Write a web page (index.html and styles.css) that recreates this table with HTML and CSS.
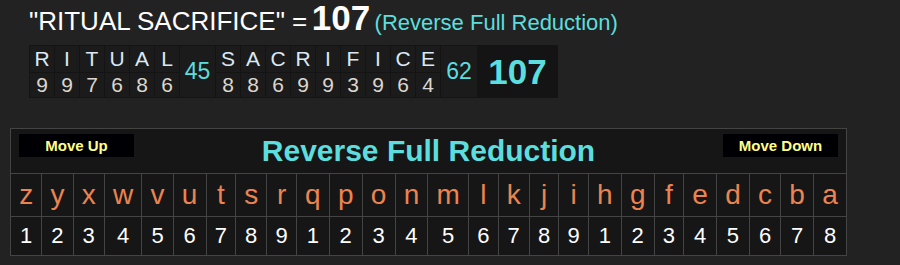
FILE: index.html
```html
<!DOCTYPE html>
<html>
<head>
<meta charset="utf-8">
<link rel="stylesheet" href="styles.css">
</head>
<body>
<div class="page">
  <div class="summary"><span class="phrase">"RITUAL SACRIFICE" =</span> <span class="total">107</span> <span class="cipher-name">(Reverse Full Reduction)</span></div>
  <table class="word">
    <tr>
      <td class="wl">R</td><td class="wl">I</td><td class="wl">T</td><td class="wl">U</td><td class="wl">A</td><td class="wl">L</td>
      <td class="wsum s1" rowspan="2">45</td>
      <td class="wl">S</td><td class="wl">A</td><td class="wl">C</td><td class="wl">R</td><td class="wl">I</td><td class="wl">F</td><td class="wl">I</td><td class="wl">C</td><td class="wl">E</td>
      <td class="wsum s2" rowspan="2">62</td>
      <td class="wgrand" rowspan="2">107</td>
    </tr>
    <tr>
      <td class="wn">9</td><td class="wn">9</td><td class="wn">7</td><td class="wn">6</td><td class="wn">8</td><td class="wn">6</td>
      <td class="wn">8</td><td class="wn">8</td><td class="wn">6</td><td class="wn">9</td><td class="wn">9</td><td class="wn">3</td><td class="wn">9</td><td class="wn">6</td><td class="wn">4</td>
    </tr>
  </table>
  <table class="chart">
    <tr>
      <td class="chart-head" colspan="26">
        <div class="head-inner">
          <button class="move">Move Up</button>
          <span class="chart-title">Reverse Full Reduction</span>
          <button class="move">Move Down</button>
        </div>
      </td>
    </tr>
    <tr class="letters">
      <td>z</td><td>y</td><td>x</td><td>w</td><td>v</td><td>u</td><td>t</td><td>s</td><td>r</td><td>q</td><td>p</td><td>o</td><td>n</td><td>m</td><td>l</td><td>k</td><td>j</td><td>i</td><td>h</td><td>g</td><td>f</td><td>e</td><td>d</td><td>c</td><td>b</td><td>a</td>
    </tr>
    <tr class="nums">
      <td>1</td><td>2</td><td>3</td><td>4</td><td>5</td><td>6</td><td>7</td><td>8</td><td>9</td><td>1</td><td>2</td><td>3</td><td>4</td><td>5</td><td>6</td><td>7</td><td>8</td><td>9</td><td>1</td><td>2</td><td>3</td><td>4</td><td>5</td><td>6</td><td>7</td><td>8</td>
    </tr>
  </table>
</div>
</body>
</html>
```
FILE: styles.css
```css
html, body {
  margin: 0;
  padding: 0;
  background: #222222;
}
body {
  font-family: "Liberation Sans", Arial, sans-serif;
  color: #ffffff;
}
.page {
  padding: 0 0 0 10px;
}
.summary {
  height: 45px;
  line-height: 36px;
  padding-left: 19px;
  white-space: nowrap;
}
.phrase {
  font-size: 26px;
  color: #ffffff;
}
.total {
  font-size: 35px;
  font-weight: bold;
  color: #ffffff;
}
.cipher-name {
  font-size: 22px;
  color: #5cdede;
}

/* word breakdown */
.word {
  border-collapse: separate;
  border-spacing: 0;
  margin-left: 19px;
  border-top: 1px solid #141414;
  border-left: 1px solid #141414;
}
.word td {
  padding: 0;
  text-align: center;
  vertical-align: middle;
  background: #1b1b1b;
  border-right: 1px solid #141414;
  border-bottom: 1px solid #141414;
}
.wl {
  width: 24px;
  height: 26px;
  font-size: 21px;
  color: #dde8f4;
}
.wn {
  width: 24px;
  height: 24px;
  font-size: 21px;
  color: #dcd6ce;
}
.wsum {
  font-size: 23px;
  color: #5cdede;
}
.s1 { width: 35px; }
.s2 { width: 36px; }
.word td.wgrand {
  width: 79px;
  font-size: 35px;
  font-weight: bold;
  color: #5cdede;
  background: #141414;
}

/* cipher chart */
.chart {
  margin-top: 30px;
  width: 837px;
  border-collapse: separate;
  border-spacing: 0;
  border-top: 1px solid #444444;
  border-left: 1px solid #444444;
  background: #161616;
}
.chart td {
  padding: 0 8px;
  text-align: center;
  vertical-align: middle;
  border-right: 1px solid #444444;
  border-bottom: 1px solid #444444;
}
.chart td.chart-head {
  height: 44px;
  padding: 0 8px;
  vertical-align: top;
}
.head-inner {
  display: flex;
  justify-content: space-between;
  align-items: flex-start;
  height: 44px;
}
.move {
  margin-top: 5px;
  width: 115px;
  height: 23px;
  padding: 0;
  border: none;
  background: #000004;
  color: #ffff88;
  font-family: "Liberation Sans", Arial, sans-serif;
  font-size: 15px;
  font-weight: bold;
}
.chart-title {
  align-self: center;
  font-size: 30px;
  font-weight: bold;
  color: #5cdede;
}
.letters td {
  height: 42px;
  font-size: 28px;
  color: #ec8450;
}
.nums td {
  height: 38px;
  font-size: 22px;
  color: #ffffff;
}
```
